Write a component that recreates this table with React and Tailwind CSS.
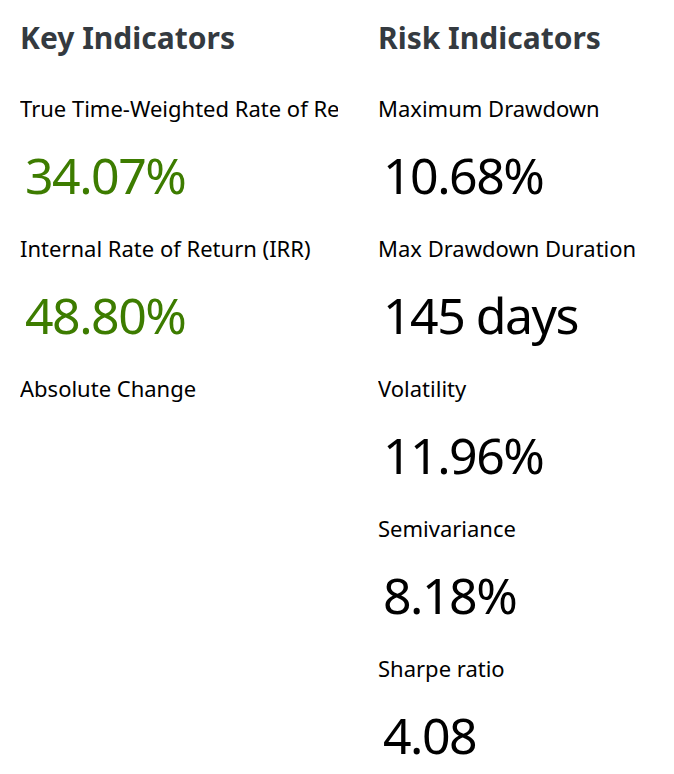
const keyIndicators = [
  { label: "True Time-Weighted Rate of Return (TTWROR)", value: "34.07%" },
  { label: "Internal Rate of Return (IRR)", value: "48.80%" },
  { label: "Absolute Change", value: "" },
];

const riskIndicators = [
  { label: "Maximum Drawdown", value: "10.68%" },
  { label: "Max Drawdown Duration", value: "145 days" },
  { label: "Volatility", value: "11.96%" },
  { label: "Semivariance", value: "8.18%" },
  { label: "Sharpe ratio", value: "4.08" },
];

const Indicator = ({ label, value, positive }) => (
  <div className="h-[140px]">
    <div className="text-[22px] leading-[30px] text-black">{label}</div>
    {value && (
      <div
        className={`ml-[5px] text-[50px] leading-[104px] tracking-[-1.5px] ${
          positive ? "text-[#3d7c00]" : "text-black"
        }`}
      >
        {value}
      </div>
    )}
  </div>
);

const Column = ({ title, items, positive, className }) => (
  <section className={`whitespace-nowrap overflow-hidden ${className}`}>
    <h2 className="text-[30px] font-bold leading-[40px] text-[#343a40]">
      {title}
    </h2>
    <div className="mt-[35px]">
      {items.map((item) => (
        <Indicator key={item.label} {...item} positive={positive} />
      ))}
    </div>
  </section>
);

export default function App() {
  return (
    <div
      className="flex bg-white pt-[18px] pl-5 h-[774px] overflow-hidden"
      style={{ fontFamily: '"Noto Sans", "Open Sans", sans-serif' }}
    >
      <Column
        title="Key Indicators"
        items={keyIndicators}
        positive
        className="w-[318px]"
      />
      <Column
        title="Risk Indicators"
        items={riskIndicators}
        className="ml-10 flex-1"
      />
    </div>
  );
}
